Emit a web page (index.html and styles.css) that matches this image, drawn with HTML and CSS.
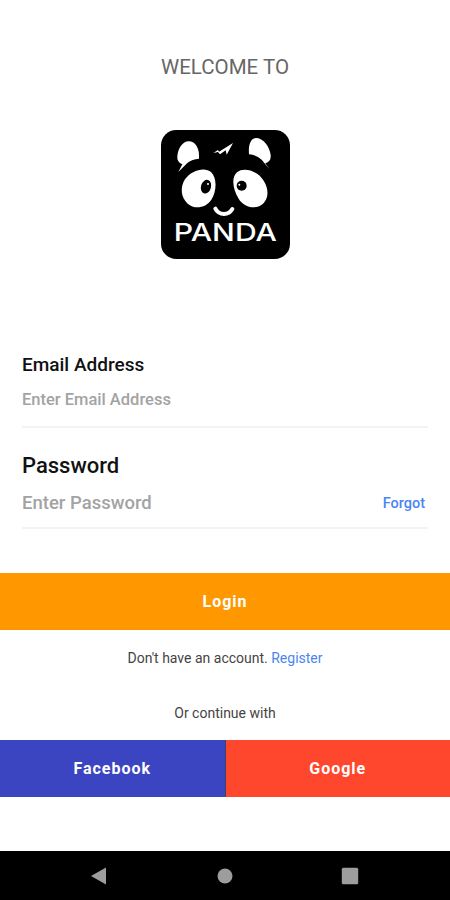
FILE: index.html
```html
<!DOCTYPE html>
<html lang="en">
<head>
<meta charset="utf-8">
<meta name="viewport" content="width=device-width, initial-scale=1">
<title>Panda Login</title>
<link rel="stylesheet" href="styles.css">
</head>
<body>
<main class="screen">
  <h1 class="welcome">WELCOME TO</h1>
  <svg class="logo" viewBox="33 30 387 387" role="img" aria-label="Panda">
    <rect x="33" y="30" width="387" height="387" rx="46" fill="#000"/>
    <g fill="#fff">
      <path d="M85 156L97 133Q80 126 82 108C84 85 99 62 118 64C140 66 149 90 147 116Q127 117 112 129Z"/>
      <path d="M358 147L346 130Q364 124 362 105C359 78 338 53 317 54C300 56 295 78 297 103Q318 104 335 119Z"/>
      <path d="M190 99L204 90L207 95L249 69L230 104L227 91L210 103L204 96Z"/>
      <path d="M105 178C123 151 164 139 183 156C201 173 201 213 184 239C168 263 135 270 113 251C92 232 90 202 105 178Z"/>
      <path d="M261 157C282 140 323 153 341 182C359 210 355 241 334 255C310 270 280 259 266 236C250 211 242 174 261 157Z"/>
      <text class="logo-name" x="71" y="363" textLength="310" lengthAdjust="spacingAndGlyphs">PANDA</text>
    </g>
    <ellipse cx="168" cy="200" rx="15" ry="21" transform="rotate(17 168 200)"/>
    <circle cx="174" cy="192" r="3" fill="#fff"/>
    <circle cx="275" cy="197" r="15"/>
    <circle cx="268" cy="194" r="3" fill="#fff"/>
    <path d="M196 266Q204 282 222 282Q238 282 247 267" fill="none" stroke="#fff" stroke-width="12" stroke-linecap="round"/>
  </svg>

  <form class="form">
    <div class="field">
      <div class="label label-email">Email Address</div>
      <div class="entry entry-email">Enter Email Address</div>
    </div>
    <div class="field">
      <div class="label label-password">Password</div>
      <div class="entry entry-password"><span>Enter Password</span><a class="forgot">Forgot</a></div>
    </div>
  </form>

  <div class="button login">Login</div>
  <p class="note">Don't have an account. <a class="register">Register</a></p>
  <p class="note continue">Or continue with</p>
  <div class="social">
    <div class="button facebook">Facebook</div>
    <div class="button google">Google</div>
  </div>
</main>
<nav class="navbar">
  <svg class="nav-icon" viewBox="0 0 18 18"><path d="M1 9L16 .5V17.5Z"/></svg>
  <svg class="nav-icon" viewBox="0 0 18 18"><circle cx="9" cy="9" r="7.5"/></svg>
  <svg class="nav-icon" viewBox="0 0 18 18"><rect x=".8" y=".8" width="16.4" height="16.4" rx="1.5"/></svg>
</nav>
</body>
</html>
```
FILE: styles.css
```css
* { box-sizing: border-box; }

body {
  margin: 0;
  height: 900px;
  display: flex;
  flex-direction: column;
  background: #fff;
  color: #111;
  font-family: Roboto, "Liberation Sans", sans-serif;
}

.screen {
  flex: 1;
  display: flex;
  flex-direction: column;
  padding-top: 55px;
}

.welcome {
  margin: 0;
  text-align: center;
  font-size: 20.5px;
  font-weight: 400;
  line-height: 24px;
  color: #666;
}

.logo {
  display: block;
  width: 129px;
  height: 129px;
  margin: 51px auto 0;
}

.logo-name {
  font-family: Inter, sans-serif;
  font-size: 71px;
  font-weight: 500;
}

.form { padding: 94px 22px 0; }

.field {
  height: 75px;
  border-bottom: 2px solid #f3f3f3;
}

.field + .field { margin-top: 26px; }

.label {
  font-weight: 500;
  line-height: 24px;
  color: #111;
}

.label-email { font-size: 19px; }
.label-password { font-size: 22px; }

.entry {
  display: flex;
  justify-content: space-between;
  font-weight: 500;
  line-height: 24px;
  color: #a3a3a3;
}

.entry-email { margin-top: 11px; font-size: 16.5px; }
.entry-password { margin-top: 13px; font-size: 18.5px; }

.forgot {
  padding: 1px 3px 0 0;
  font-size: 14.5px;
  color: #4a86f0;
}

.button {
  height: 57px;
  color: #fff;
  font-size: 16px;
  font-weight: 700;
  letter-spacing: 1px;
  line-height: 57px;
  text-align: center;
}

.login { margin-top: 44px; background: #ff9800; }

.note {
  margin: 18px 0 0;
  font-size: 14px;
  line-height: 20px;
  text-align: center;
  color: #444;
}

.register { color: #4a86f0; }
.continue { margin-top: 35px; }

.social { display: flex; margin-top: 17px; }
.facebook { flex: 1; background: #3c45c1; border-right: 1px solid #3d4170; }
.google { flex: 1; background: #ff472e; }

.navbar {
  display: flex;
  justify-content: space-between;
  align-items: center;
  height: 49px;
  padding: 0 91px 0 90px;
  background: #000;
}

.nav-icon {
  width: 18px;
  height: 18px;
  fill: #9d9d9d;
}
```
